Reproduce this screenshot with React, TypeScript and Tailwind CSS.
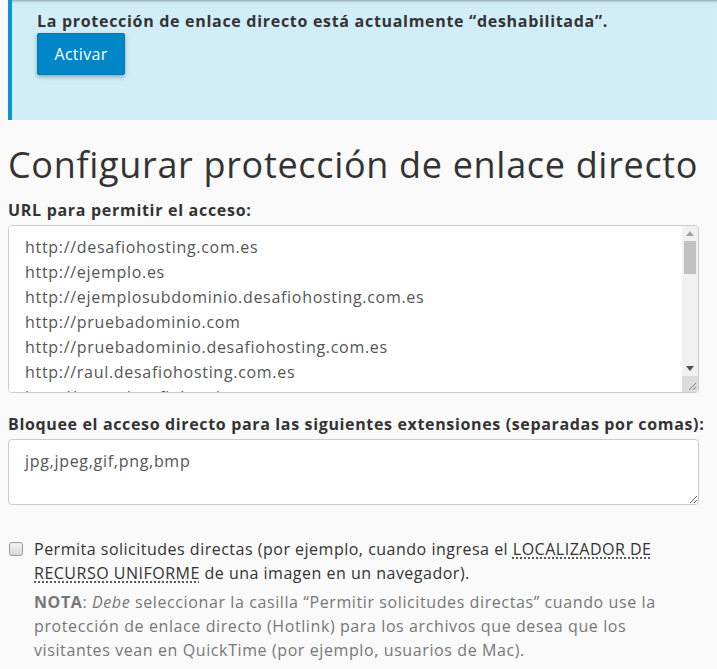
import { useState } from "react";

const urls = [
  "http://desafiohosting.com.es",
  "http://ejemplo.es",
  "http://ejemplosubdominio.desafiohosting.com.es",
  "http://pruebadominio.com",
  "http://pruebadominio.desafiohosting.com.es",
  "http://raul.desafiohosting.com.es",
  "http://www.desafiohosting.com.es",
  "http://www.ejemplo.es",
  "http://www.pruebadominio.com",
];

// faux classic scrollbar column beside the url list
function ScrollColumn() {
  return (
    <div className="flex w-[16px] shrink-0 flex-col bg-[#f1f1f1]">
      <div className="flex h-[15px] items-center justify-center">
        <svg width="8" height="5" viewBox="0 0 8 5"><path d="M0 5 L4 0 L8 5 Z" fill="#a3a3a3" /></svg>
      </div>
      <div className="mx-[2px] h-[33px] bg-[#c1c1c1]" />
      <div className="flex-1" />
      <div className="flex h-[15px] items-center justify-center">
        <svg width="8" height="5" viewBox="0 0 8 5"><path d="M0 0 L8 0 L4 5 Z" fill="#505050" /></svg>
      </div>
      <div className="flex h-[16px] items-end justify-end bg-[#dcdcdc] p-[2px]">
        <svg width="8" height="8" viewBox="0 0 8 8">
          <path d="M8 1 L1 8 M8 5 L5 8" stroke="#7a7a7a" strokeWidth="1" />
        </svg>
      </div>
    </div>
  );
}

export default function App() {
  const [allowDirect, setAllowDirect] = useState(false);
  const [list, setList] = useState(urls.join("\n"));
  const [exts, setExts] = useState("jpg,jpeg,gif,png,bmp");

  return (
    <div className="min-h-[669px] bg-[#fafafa] pl-2 tracking-[0.7px] text-[#333] font-['Open_Sans',sans-serif]">
      {/* status callout */}
      <div className="h-[120px] border-l-4 border-[#0399d1] bg-[#d1edf8] pl-[25px] pt-[9px] shadow-[inset_0_3px_3px_-2px_rgba(0,0,0,0.35)]">
        <p className="text-base font-bold leading-[24px]">
          La protección de enlace directo está actualmente “deshabilitada”.
        </p>
        <button className="h-[42px] w-[88px] rounded-[2px] border border-[#0077b3] bg-[#0086c6] text-base tracking-[0.3px] text-white shadow-[0_2px_4px_rgba(0,0,0,0.3)]">
          Activar
        </button>
      </div>

      <div className="pr-[18px]">
        <h1 className="mt-[21px] text-[36px] font-normal leading-[48px] tracking-[0.68px]">
          Configurar protección de enlace directo
        </h1>

        <label className="mt-[10px] block text-base font-bold leading-[22px]">URL para permitir el acceso:</label>
        <div className="mt-[4px] flex h-[168px] overflow-hidden rounded-[4px] border border-[#ccc] bg-white">
          <textarea
            value={list}
            onChange={(e) => setList(e.target.value)}
            className="block h-full min-w-0 flex-1 resize-none overflow-hidden bg-white pl-4 pr-2 pt-[9px] text-base leading-[25px] text-[#555] outline-none"
          />
          <ScrollColumn />
        </div>

        <label className="mt-[20px] block whitespace-nowrap text-base font-bold leading-[22px] tracking-[0.65px]">
          Bloquee el acceso directo para las siguientes extensiones (separadas por comas):
        </label>
        <textarea
          value={exts}
          onChange={(e) => setExts(e.target.value)}
          className="mt-[4px] block h-[66px] w-full resize-y rounded-[4px] border border-[#ccc] bg-white px-4 pt-[9px] text-base leading-[25px] text-[#555] outline-none"
        />

        <div className="mt-[32px] flex items-start gap-[11px]">
          <input
            type="checkbox"
            checked={allowDirect}
            onChange={(e) => setAllowDirect(e.target.checked)}
            className="mt-[5px] ml-[1px] h-[14px] w-[14px] shrink-0 appearance-none rounded-[3px] border border-[#9a9a9a] bg-gradient-to-b from-[#f4f4f4] to-[#d8d8d8] checked:bg-[#0086c6]"
          />
          <div className="leading-[23px] tracking-[0.5px]">
            <p className="text-base text-[#333]">
              Permita solicitudes directas (por ejemplo, cuando ingresa el{" "}
              <abbr title="URL" className="underline decoration-dotted underline-offset-[3px]">
                LOCALIZADOR DE RECURSO UNIFORME
              </abbr>{" "}
              de una imagen en un navegador).
            </p>
            <p className="mt-[5px] text-base tracking-[0.6px] text-[#777]">
              <strong>NOTA</strong>: <em>Debe</em> seleccionar la casilla “Permitir solicitudes directas” cuando use la
              protección de enlace directo (Hotlink) para los archivos que desea que los visitantes vean en QuickTime
              (por ejemplo, usuarios de Mac).
            </p>
          </div>
        </div>
      </div>
    </div>
  );
}
